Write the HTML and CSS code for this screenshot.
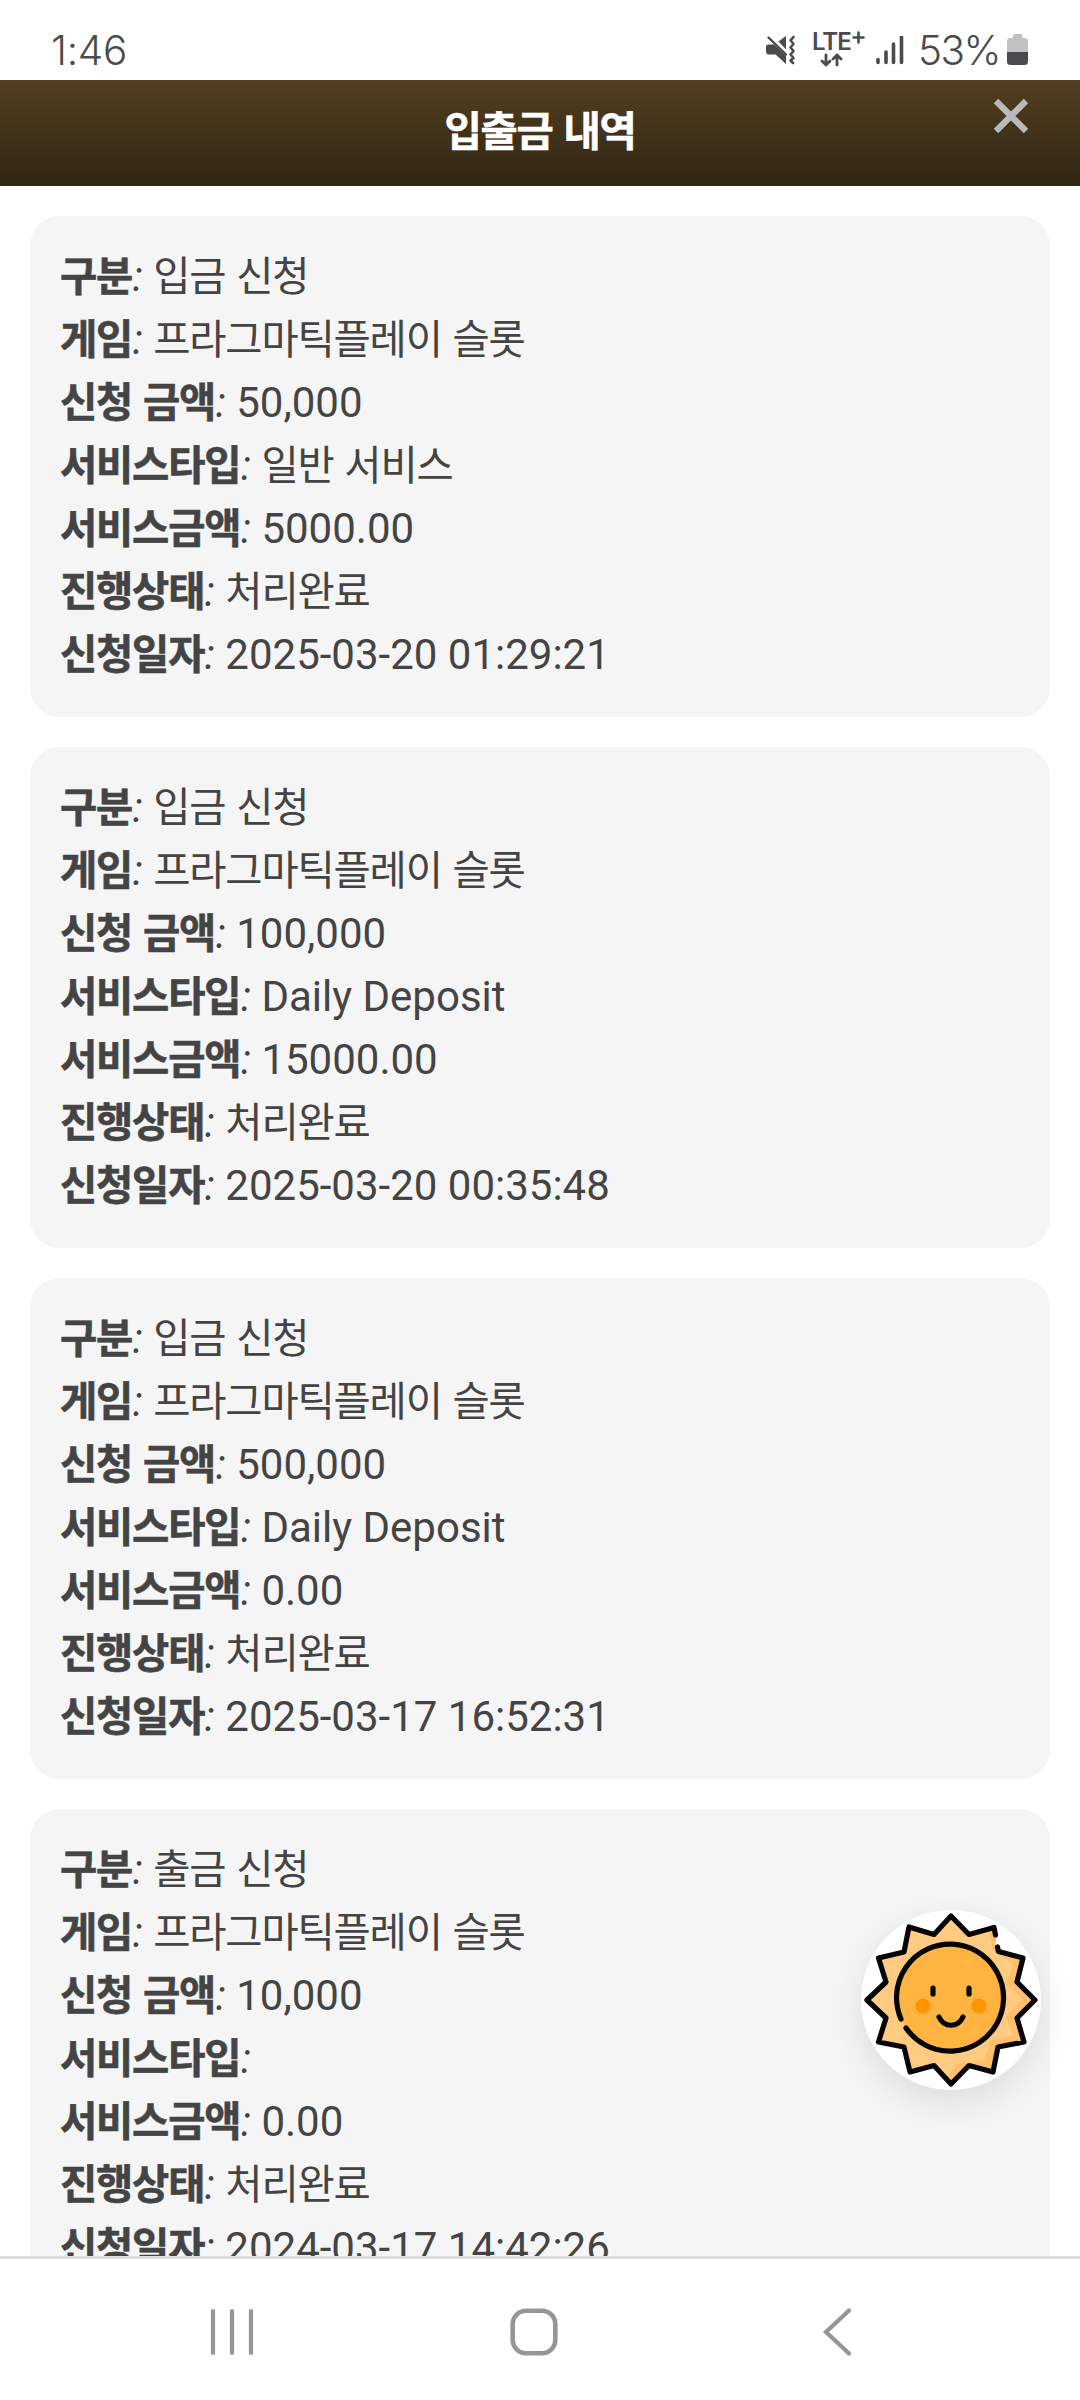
FILE: index.html
```html
<!DOCTYPE html>
<html lang="ko">
<head>
<meta charset="utf-8">
<title>입출금 내역</title>
<link rel="stylesheet" href="styles.css">
</head>
<body>
<div class="screen">
  <div class="status">
    <span class="clock">1:46</span>
    <div class="status-right">
      <svg class="mute" width="32" height="32" viewBox="0 0 32 32">
        <path d="M3 10.500h6L21 21.500V30L10.500 20.500H3.500Q1 20 1 17.500v-4Q1 10.500 3 10.500Z" fill="#4b4b4d"/>
        <path d="M13.500 7.500 21 2v13.500Z" fill="#4b4b4d"/>
        <path d="M3.500 3.500 21 20.500" fill="none" stroke="#4b4b4d" stroke-width="2.400" stroke-linecap="round"/>
        <path d="M28.500 3l-3 3.300 3 3.700-3 3.500 3 3.500-3 3.500 3 3.500-3 2.500 2.500 2.500" fill="none" stroke="#4b4b4d" stroke-width="2.600" stroke-linecap="round" stroke-linejoin="round"/>
      </svg>
      <div class="network">
        <span class="lte">LTE</span>
        <svg width="54" height="36" viewBox="0 0 54 36">
          <path d="M41.500 6.500h10M46.500 1.500v10" stroke="#4b4b4d" stroke-width="2.600" stroke-linecap="round"/>
          <path d="M14 24v10M10 30l4 4 4-4M25 34V24M21 28l4-4 4 4" fill="none" stroke="#4b4b4d" stroke-width="2.800" stroke-linecap="round" stroke-linejoin="round"/>
        </svg>
      </div>
      <svg class="signal" width="28" height="30" viewBox="0 0 28 30">
        <path d="M2 23.500v3M10 16v10.500M17.500 8v18.500M25.500 1v25.500" stroke="#4b4b4d" stroke-width="3.600" stroke-linecap="round"/>
      </svg>
      <span class="percent">53%</span>
      <svg class="battery" width="22" height="32" viewBox="0 0 22 32">
        <path d="M6 4V2q0-2 2-2h5.500q2 0 2 2v2H18q3 0 3 3v11H0V7q0-3 3-3Z" fill="#c1c1c1"/>
        <path d="M0 18h21v9.500q0 3.500-3.500 3.500h-14Q0 31 0 27.500Z" fill="#4b4b4d"/>
      </svg>
    </div>
  </div>

  <header class="topbar">
    <h1>입출금 내역</h1>
    <svg class="close" width="36" height="36" viewBox="0 0 36 36"><path d="M3 3 33 33M33 3 3 33" stroke="#bababa" stroke-width="6.200"/></svg>
  </header>

  <main class="list">
    <section class="card">
      <p><b>구분</b><i>:</i> <span class="ko">입금 신청</span></p>
      <p><b>게임</b><i>:</i> <span class="ko">프라그마틱플레이 슬롯</span></p>
      <p><b>신청 금액</b><i>:</i> 50,000</p>
      <p><b>서비스타입</b><i>:</i> <span class="ko">일반 서비스</span></p>
      <p><b>서비스금액</b><i>:</i> 5000.00</p>
      <p><b>진행상태</b><i>:</i> <span class="ko">처리완료</span></p>
      <p><b>신청일자</b><i>:</i> 2025-03-20 01:29:21</p>
    </section>
    <section class="card">
      <p><b>구분</b><i>:</i> <span class="ko">입금 신청</span></p>
      <p><b>게임</b><i>:</i> <span class="ko">프라그마틱플레이 슬롯</span></p>
      <p><b>신청 금액</b><i>:</i> 100,000</p>
      <p><b>서비스타입</b><i>:</i> Daily Deposit</p>
      <p><b>서비스금액</b><i>:</i> 15000.00</p>
      <p><b>진행상태</b><i>:</i> <span class="ko">처리완료</span></p>
      <p><b>신청일자</b><i>:</i> 2025-03-20 00:35:48</p>
    </section>
    <section class="card">
      <p><b>구분</b><i>:</i> <span class="ko">입금 신청</span></p>
      <p><b>게임</b><i>:</i> <span class="ko">프라그마틱플레이 슬롯</span></p>
      <p><b>신청 금액</b><i>:</i> 500,000</p>
      <p><b>서비스타입</b><i>:</i> Daily Deposit</p>
      <p><b>서비스금액</b><i>:</i> 0.00</p>
      <p><b>진행상태</b><i>:</i> <span class="ko">처리완료</span></p>
      <p><b>신청일자</b><i>:</i> 2025-03-17 16:52:31</p>
    </section>
    <section class="card">
      <p><b>구분</b><i>:</i> <span class="ko">출금 신청</span></p>
      <p><b>게임</b><i>:</i> <span class="ko">프라그마틱플레이 슬롯</span></p>
      <p><b>신청 금액</b><i>:</i> 10,000</p>
      <p><b>서비스타입</b><i>:</i></p>
      <p><b>서비스금액</b><i>:</i> 0.00</p>
      <p><b>진행상태</b><i>:</i> <span class="ko">처리완료</span></p>
      <p><b>신청일자</b><i>:</i> 2024-03-17 14:42:26</p>
    </section>
  </main>

  <nav class="navbar">
    <svg width="44" height="50" viewBox="0 0 44 50"><path d="M3 4v42M22 4v42M41 4v42" stroke="#959595" stroke-width="4.200" stroke-linecap="round"/></svg>
    <svg class="home" width="50" height="50" viewBox="0 0 50 50"><rect x="3.700" y="3.700" width="42.600" height="42.600" rx="13.500" fill="none" stroke="#959595" stroke-width="4.600"/></svg>
    <svg width="32" height="50" viewBox="0 0 32 50"><path d="M27 3.500 4 25 27 46.500" fill="none" stroke="#959595" stroke-width="4.200" stroke-linecap="round"/></svg>
  </nav>

  <div class="sun">
    <svg width="180" height="180" viewBox="21 20 180 180">
      <path d="M132 46 152 36 158 42 155 56 158 61 185 68 178 92 197 109 177 128 185 152 160 157 153 183 128 175 111 195 94 175 70 183 64 157 38 151 46 128 27 110 46 92 38 68 64 62 69 37 94 44 111 25Z" fill="#fecb81"/>
      <path d="M149 39 156 44 155 57 160 63 184 68 177 92 195 109 177 128 184 152 159 157 153 182 129 174 111 193 106 187 119 173 144 170 151 150 173 146 166 127 182 109 166 94 173 74 153 60Z" fill="#fdbf6c"/>
      <circle cx="111" cy="110" r="53" fill="#ffb442"/>
      <path d="M146 72A55 55 0 0 1 118 162 52 52 0 0 0 146 72Z" fill="#fdaa2c"/>
      <g fill="none" stroke="#060505" stroke-width="5.200" stroke-linecap="round" stroke-linejoin="round">
        <path d="M155.500 45 154 37.500 129 44.500 111 26 94 44.500 69 37 64 62 38.500 68 46 92 27 110 46 128 38.500 152 64 157 70 182 94 175.500 111 194 129 175.500 153 182 158 157 184 152 177 128 195 110 177 92 183 68 158.500 61.500 157.500 57"/>
        <path d="M61 129A53.500 53.500 0 1 1 66 138"/>
        <path d="M93 98v6M129 98v6M99 127c5 11 19 11 24 0"/>
      </g>
      <g fill="#ff9300"><circle cx="83" cy="116" r="7.500"/><circle cx="139" cy="116" r="7.500"/></g>
    </svg>
  </div>
</div>
</body>
</html>
```
FILE: styles.css
```css
* { box-sizing: border-box; }
body { margin: 0; background: #fff; }
.screen {
  position: relative;
  display: flex;
  flex-direction: column;
  width: 1080px;
  height: 2400px;
  overflow: hidden;
  background: #fff;
  color: #444;
  font-family: Roboto, "Noto Sans CJK KR", sans-serif;
}
.status {
  flex: none;
  display: flex;
  justify-content: space-between;
  height: 80px;
  padding: 0 51px;
  color: #4b4b4d;
}
.clock, .percent {
  font-family: Inter, sans-serif;
  font-size: 40.5px;
  line-height: 48px;
  padding-top: 27px;
  font-weight: 360;
}
.clock { letter-spacing: -.3px; }
.percent { margin-left: 14px; letter-spacing: -1.5px; width: 89px; white-space: nowrap; }
.status-right { display: flex; align-items: flex-start; }
.mute { margin-top: 34px; }
.network { display: grid; margin: 31px 0 0 15px; width: 54px; }
.network > * { grid-area: 1 / 1; }
.lte {
  font-family: Inter, sans-serif;
  font-size: 24px;
  line-height: 22px;
  font-weight: 600;
  letter-spacing: -1px;
}
.signal { margin: 36px 0 0 10px; }
.battery { margin-top: 34px; }
.topbar {
  flex: none;
  display: grid;
  grid-template-columns: 100px 1fr 100px;
  height: 106px;
  background: linear-gradient(#523f20, #302513);
  color: #fff;
}
.topbar h1 {
  grid-column: 2;
  margin: 0;
  font-size: 40.5px;
  line-height: 104px;
  font-weight: 700;
  letter-spacing: -1.2px;
  word-spacing: 2px;
  text-align: center;
  -webkit-text-stroke: .6px #fff;
}
.close { margin: 18px 0 0 13px; }
.list {
  flex: 1;
  min-height: 0;
  overflow: hidden;
  display: flex;
  flex-direction: column;
  gap: 30px;
  padding: 30px 30px 0;
}
.card {
  flex: none;
  padding: 30px;
  border-radius: 30px;
  background: #f5f5f5;
}
.card p {
  margin: 0;
  height: 63px;
  font-size: 42px;
  line-height: 61px;
  white-space: nowrap;
}
.card b, .ko {
  font-size: 40.5px;
  letter-spacing: -1.2px;
  word-spacing: 2px;
}
.card b { -webkit-text-stroke: .6px #444; }
.card i { margin-left: .6px; }
.navbar {
  flex: none;
  display: flex;
  justify-content: space-between;
  height: 144px;
  padding: 48px 226px 0 210px;
  border-top: 3px solid #e0e0e0;
  background: #fff;
}
.home { margin-right: 8px; }
.sun {
  position: absolute;
  left: 861px;
  top: 1910px;
  width: 180px;
  height: 180px;
  border-radius: 50%;
  background: #fff;
  box-shadow: 0 12px 36px rgba(0, 0, 0, .1);
}
.sun svg { display: block; }
```
